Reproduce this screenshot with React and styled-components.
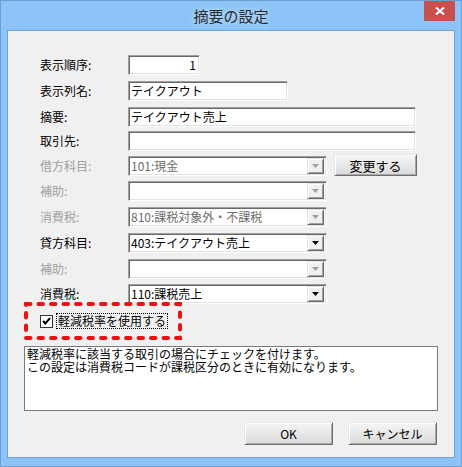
import styled, { createGlobalStyle } from "styled-components";

const GlobalStyle = createGlobalStyle`
  html, body {
    margin: 0;
    padding: 0;
    background: #ffffff;
  }
  body {
    font-family: "Noto Sans CJK JP", "Noto Sans", sans-serif;
    font-size: 12px;
  }
`;

const App = () => {
  return (
    <>
      <GlobalStyle />
      <Window>
        <TitleBar>
          <Title>摘要の設定</Title>
          <CloseButton>
            <svg width="10" height="8" viewBox="0 0 10 8">
              <path d="M1 0.5 L9 7.5 M9 0.5 L1 7.5" stroke="#fff" strokeWidth="2" />
            </svg>
          </CloseButton>
        </TitleBar>
        <Client>
          <Form>
            <Row $gap={0}>
              <Label>表示順序:</Label>
              <TextBox $w={72} $align="right">1</TextBox>
            </Row>
            <Row $gap={6}>
              <Label>表示列名:</Label>
              <TextBox $w={160}>テイクアウト</TextBox>
            </Row>
            <Row $gap={6}>
              <Label>摘要:</Label>
              <TextBox $w={288}>テイクアウト売上</TextBox>
            </Row>
            <Row $gap={4}>
              <Label>取引先:</Label>
              <TextBox $w={288} />
            </Row>
            <Row $gap={5}>
              <Label $disabled>借方科目:</Label>
              <Combo value="101:現金" disabled />
              <PushButton $w={83} $h={22} $side>変更する</PushButton>
            </Row>
            <Row $gap={5}>
              <Label $disabled>補助:</Label>
              <Combo value="" disabled />
            </Row>
            <Row $gap={6}>
              <Label $disabled>消費税:</Label>
              <Combo value="810:課税対象外・不課税" disabled />
            </Row>
            <Row $gap={6}>
              <Label>貸方科目:</Label>
              <Combo value="403:テイクアウト売上" />
            </Row>
            <Row $gap={6}>
              <Label $disabled>補助:</Label>
              <Combo value="" disabled />
            </Row>
            <Row $gap={5}>
              <Label>消費税:</Label>
              <Combo value="110:課税売上" />
            </Row>
            <CheckRow>
              <CheckBox>
                <svg width="11" height="11" viewBox="0 0 11 11">
                  <path d="M2 5 L4.3 7.5 L9 2.2" stroke="#000" strokeWidth="2" fill="none" />
                </svg>
              </CheckBox>
              <FocusLabel>軽減税率を使用する</FocusLabel>
              <Marker width="158" height="38" viewBox="0 0 158 38">
                <rect
                  x="2"
                  y="2"
                  width="154"
                  height="34"
                  fill="none"
                  stroke="#ee1111"
                  strokeWidth="4"
                  strokeDasharray="4.5 8"
                  strokeLinecap="round"
                />
              </Marker>
            </CheckRow>
          </Form>
          <Description>
            <DescLine>軽減税率に該当する取引の場合にチェックを付けます。</DescLine>
            <DescLine>この設定は消費税コードが課税区分のときに有効になります。</DescLine>
          </Description>
          <ButtonBar>
            <PushButton $w={89} $h={23}>OK</PushButton>
            <PushButton $w={89} $h={23}>キャンセル</PushButton>
          </ButtonBar>
        </Client>
      </Window>
    </>
  );
};

const Combo = ({ value, disabled }) => (
  <ComboBox>
    <ComboValue $disabled={disabled}>{value}</ComboValue>
    <ArrowButton>
      <svg width="7" height="4" viewBox="0 0 7 4">
        <path d="M0 0 H7 L3.5 4 Z" fill={disabled ? "#a0a0a0" : "#000"} />
      </svg>
    </ArrowButton>
  </ComboBox>
);

export default App;

const Window = styled.div`
  width: 462px;
  height: 467px;
  box-sizing: border-box;
  border: 1px solid #6e9fd2;
  background: #8cc4f7;
  display: flex;
  flex-direction: column;
`;

const TitleBar = styled.div`
  height: 29px;
  display: grid;
  grid-template-columns: 1fr auto 1fr;
  align-items: start;
`;

const Title = styled.div`
  grid-column: 2;
  line-height: 29px;
  font-size: 15px;
  color: #2b2b2b;
  text-shadow: 0 0 6px rgba(255, 255, 255, 0.6);
`;

const CloseButton = styled.div`
  grid-column: 3;
  justify-self: end;
  width: 31px;
  height: 20px;
  margin-right: 6px;
  background: #c75050;
  display: flex;
  align-items: center;
  justify-content: center;
`;

const Client = styled.div`
  flex: 1;
  margin: 0 6px 8px;
  border: 1px solid #72a3d6;
  background: #f0f0f0;
  padding-top: 24px;
  display: flex;
  flex-direction: column;
`;

const Form = styled.div`
  padding-left: 32px;
  display: flex;
  flex-direction: column;
`;

const Row = styled.div`
  display: flex;
  align-items: flex-start;
  margin-top: ${(p) => p.$gap}px;
`;

const Label = styled.div`
  width: 88px;
  line-height: 20px;
  color: ${(p) => (p.$disabled ? "#a0a0a0" : "#000")};
`;

const sunken = `
  box-sizing: border-box;
  border: 1px solid;
  border-color: #a0a0a0 #ffffff #ffffff #a0a0a0;
  box-shadow: inset 1px 1px 0 #696969, inset -1px -1px 0 #e3e3e3;
  background: #ffffff;
`;

const TextBox = styled.div`
  ${sunken}
  width: ${(p) => p.$w}px;
  height: 20px;
  padding: 0 3px 0 2px;
  line-height: 18px;
  text-align: ${(p) => p.$align || "left"};
  color: #000;
  white-space: nowrap;
`;

const ComboBox = styled.div`
  ${sunken}
  width: 199px;
  height: 20px;
  padding: 2px;
  display: flex;
  align-items: center;
`;

const ComboValue = styled.div`
  flex: 1;
  line-height: 16px;
  color: ${(p) => (p.$disabled ? "#6d6d6d" : "#000")};
  white-space: nowrap;
`;

const ArrowButton = styled.div`
  width: 17px;
  height: 16px;
  box-sizing: border-box;
  background: #f0f0f0;
  border: 1px solid;
  border-color: #e3e3e3 #696969 #696969 #e3e3e3;
  box-shadow: inset 1px 1px 0 #ffffff, inset -1px -1px 0 #a0a0a0;
  display: flex;
  align-items: center;
  justify-content: center;
`;

const PushButton = styled.div`
  width: ${(p) => p.$w}px;
  height: ${(p) => p.$h}px;
  box-sizing: border-box;
  margin: ${(p) => (p.$side ? "-2px 0 0 7px" : "0")};
  border: 1px solid;
  border-color: #e6e6e6 #6f6f6f #6f6f6f #e6e6e6;
  box-shadow: inset 1px 1px 0 #ffffff, inset -1px -1px 0 #a8a8a8;
  background: linear-gradient(#f6f6f6, #dadada);
  display: flex;
  align-items: center;
  justify-content: center;
  color: #000;
  font-size: ${(p) => (p.$side ? "13px" : "12px")};
`;

const CheckRow = styled.div`
  position: relative;
  margin-top: 9px;
  height: 16px;
  display: flex;
  align-items: center;
`;

const CheckBox = styled.div`
  width: 13px;
  height: 13px;
  box-sizing: border-box;
  border: 1px solid #333333;
  background: #ffffff;
  display: flex;
  align-items: center;
  justify-content: center;
`;

const FocusLabel = styled.div`
  margin-left: 3px;
  padding: 0 1px;
  line-height: 14px;
  border: 1px dotted #000;
  color: #000;
  white-space: nowrap;
`;

const Marker = styled.svg`
  position: absolute;
  left: -16px;
  top: -11px;
`;

const Description = styled.div`
  margin: 17px 16px 0;
  height: 65px;
  box-sizing: border-box;
  border: 1px solid #7a7a7a;
  background: #ffffff;
  padding: 0 2px;
  color: #000;
`;

const DescLine = styled.div`
  height: 13px;
  line-height: 14px;
  white-space: nowrap;
`;

const ButtonBar = styled.div`
  margin-top: 11px;
  padding-right: 17px;
  display: flex;
  justify-content: flex-end;
  gap: 15px;
`;
